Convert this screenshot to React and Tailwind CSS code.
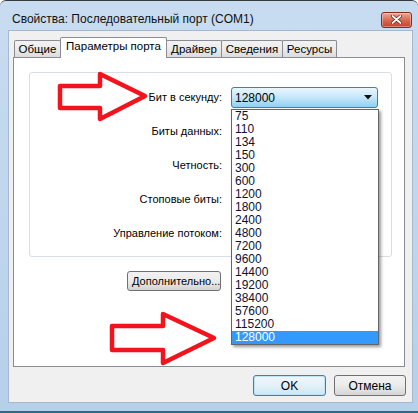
const rates = ['75', '110', '134', '150', '300', '600', '1200', '1800', '2400', '4800', '7200', '9600', '14400', '19200', '38400', '57600', '115200', '128000']

const rows = ['Бит в секунду:', 'Биты данных:', 'Четность:', 'Стоповые биты:', 'Управление потоком:']

const tabs = [
  { label: 'Общие', w: 'w-[47px]' },
  { label: 'Параметры порта', w: 'w-[107px]', active: true },
  { label: 'Драйвер', w: 'w-[56px]' },
  { label: 'Сведения', w: 'w-[62px]' },
  { label: 'Ресурсы', w: 'w-[55px]' },
]

export default function App() {
  return (
    <div className="relative w-[418px] h-[413px] overflow-hidden font-['Liberation_Sans',Arial,sans-serif] text-black bg-linear-to-b from-[#c8dcf1] to-[#b6d0ea] border-t border-[#3a3a3a] rounded-t-[6px]">
      {/* title bar */}
      <div className="h-[29px] flex items-center justify-between pt-[7px] pl-[12px] pr-[6px]">
        <span className="text-[12px] text-[#111]">Свойства: Последовательный порт (COM1)</span>
        <CloseButton />
      </div>

      {/* client area */}
      <div className="ml-[8px] w-[405px] h-[373px] bg-[#f0f0f0] border border-[#a4b9cf]">
        <div className="flex items-end h-[20px] mt-[6px] pl-[5px] relative z-10">
          {tabs.map((t, i) => (
            <div
              key={t.label}
              className={
                t.active
                  ? `${t.w} h-[21px] -mb-px -ml-px bg-white border border-b-0 border-[#898c95] rounded-t-[2px] flex items-center justify-center text-[11.5px] pb-[3px] relative z-10`
                  : `${t.w} h-[17px] ${i > 0 ? '-ml-px' : ''} bg-linear-to-b from-[#f3f3f3] via-[#ebebeb] to-[#dcdcdc] border border-b-0 border-[#898c95] rounded-t-[2px] flex items-center justify-center text-[11.5px] pt-[2px]`
              }
            >
              {t.label}
            </div>
          ))}
        </div>

        {/* tab page */}
        <div className="ml-[4px] w-[392px] h-[310px] bg-white border border-[#898c95]">
          <div className="ml-[15px] mt-[14px] w-[363px] h-[185px] border border-[#d5dfe5] rounded-[3px] pt-[14px]">
            <div className="grid grid-cols-[192px_147px] gap-x-[9px] gap-y-[13px]">
              {rows.map((r, i) => (
                <Row key={r} label={r} first={i === 0} />
              ))}
            </div>
          </div>
          <button className="ml-[113px] mt-[14px] w-[94px] h-[20px] rounded-[3px] border border-[#707070] bg-linear-to-b from-[#f2f2f2] via-[#ebebeb] to-[#d4d4d4] text-[11px] text-left pl-[4px]">
            Дополнительно...
          </button>
        </div>

        <div className="flex justify-end gap-[8px] pr-[6px] mt-[8px]">
          <button className="w-[73px] h-[21px] rounded-[3px] border border-[#3c7fb1] bg-linear-to-b from-[#eef7fc] via-[#e3f1f9] to-[#cde6f4] text-[12px] shadow-[inset_0_0_0_1px_#bfe3f7]">
            OK
          </button>
          <button className="w-[72px] h-[21px] rounded-[3px] border border-[#707070] bg-linear-to-b from-[#f2f2f2] via-[#ebebeb] to-[#d6d6d6] text-[12px]">
            Отмена
          </button>
        </div>
      </div>

      {/* bottom frame edge */}
      <div className="absolute left-0 right-0 bottom-0 h-[2px] bg-[#2c6a86]" />

      {/* open dropdown list */}
      <div className="absolute left-[231px] top-[108px] w-[148px] h-[236px] bg-white border border-[#646464] shadow-[2px_2px_3px_rgba(0,0,0,0.4)]">
        {rates.map(r => (
          <div
            key={r}
            className={`h-[13px] leading-[13px] text-[12px] pl-[3px] ${r === '128000' ? 'bg-[#3399ff] text-white' : 'text-[#101030]'}`}
          >
            {r}
          </div>
        ))}
      </div>

      {/* red annotation arrows */}
      <svg className="absolute inset-0 pointer-events-none" width="418" height="413" viewBox="0 0 418 413">
        <polygon
          points="60,85 100,85 100,73 145,95 100,118 100,107 60,107"
          fill="none" stroke="#f2131c" strokeWidth="4.5" strokeLinejoin="round"
        />
        <polygon
          points="112,325 163,325 163,313 214,337 163,362 163,349 112,349"
          fill="none" stroke="#f2131c" strokeWidth="4.5" strokeLinejoin="round"
        />
      </svg>
    </div>
  )
}

function Row({ label, first }) {
  return (
    <>
      <div className="h-[21px] flex items-center justify-end text-[11px]">{label}</div>
      {first ? (
        <div className="h-[21px] rounded-[3px] border border-[#3c7fb1] bg-linear-to-b from-[#eaf6fd] via-[#c4e7fa] to-[#8fd0f2] flex items-center justify-between pl-[3px] pr-[5px]">
          <span className="text-[12px]">128000</span>
          <svg width="8" height="5" viewBox="0 0 8 5"><path d="M0 0h8L4 4.5z" fill="#111" /></svg>
        </div>
      ) : (
        <div className="h-[21px]" />
      )}
    </>
  )
}

function CloseButton() {
  return (
    <div className="w-[31px] h-[16px] mt-[1px] rounded-[3px] border border-[#8a2a1c] bg-linear-to-b from-[#eaa996] via-[#d86a52] to-[#c5412a] flex items-center justify-center shadow-[inset_0_0_0_1px_rgba(255,255,255,0.35)]">
      <svg width="11" height="9" viewBox="0 0 11 9">
        <path d="M1.5 1 L9.5 8 M9.5 1 L1.5 8" stroke="#5a1a10" strokeWidth="3.2" strokeLinecap="round" />
        <path d="M1.5 1 L9.5 8 M9.5 1 L1.5 8" stroke="#fff" strokeWidth="1.8" strokeLinecap="round" />
      </svg>
    </div>
  )
}
